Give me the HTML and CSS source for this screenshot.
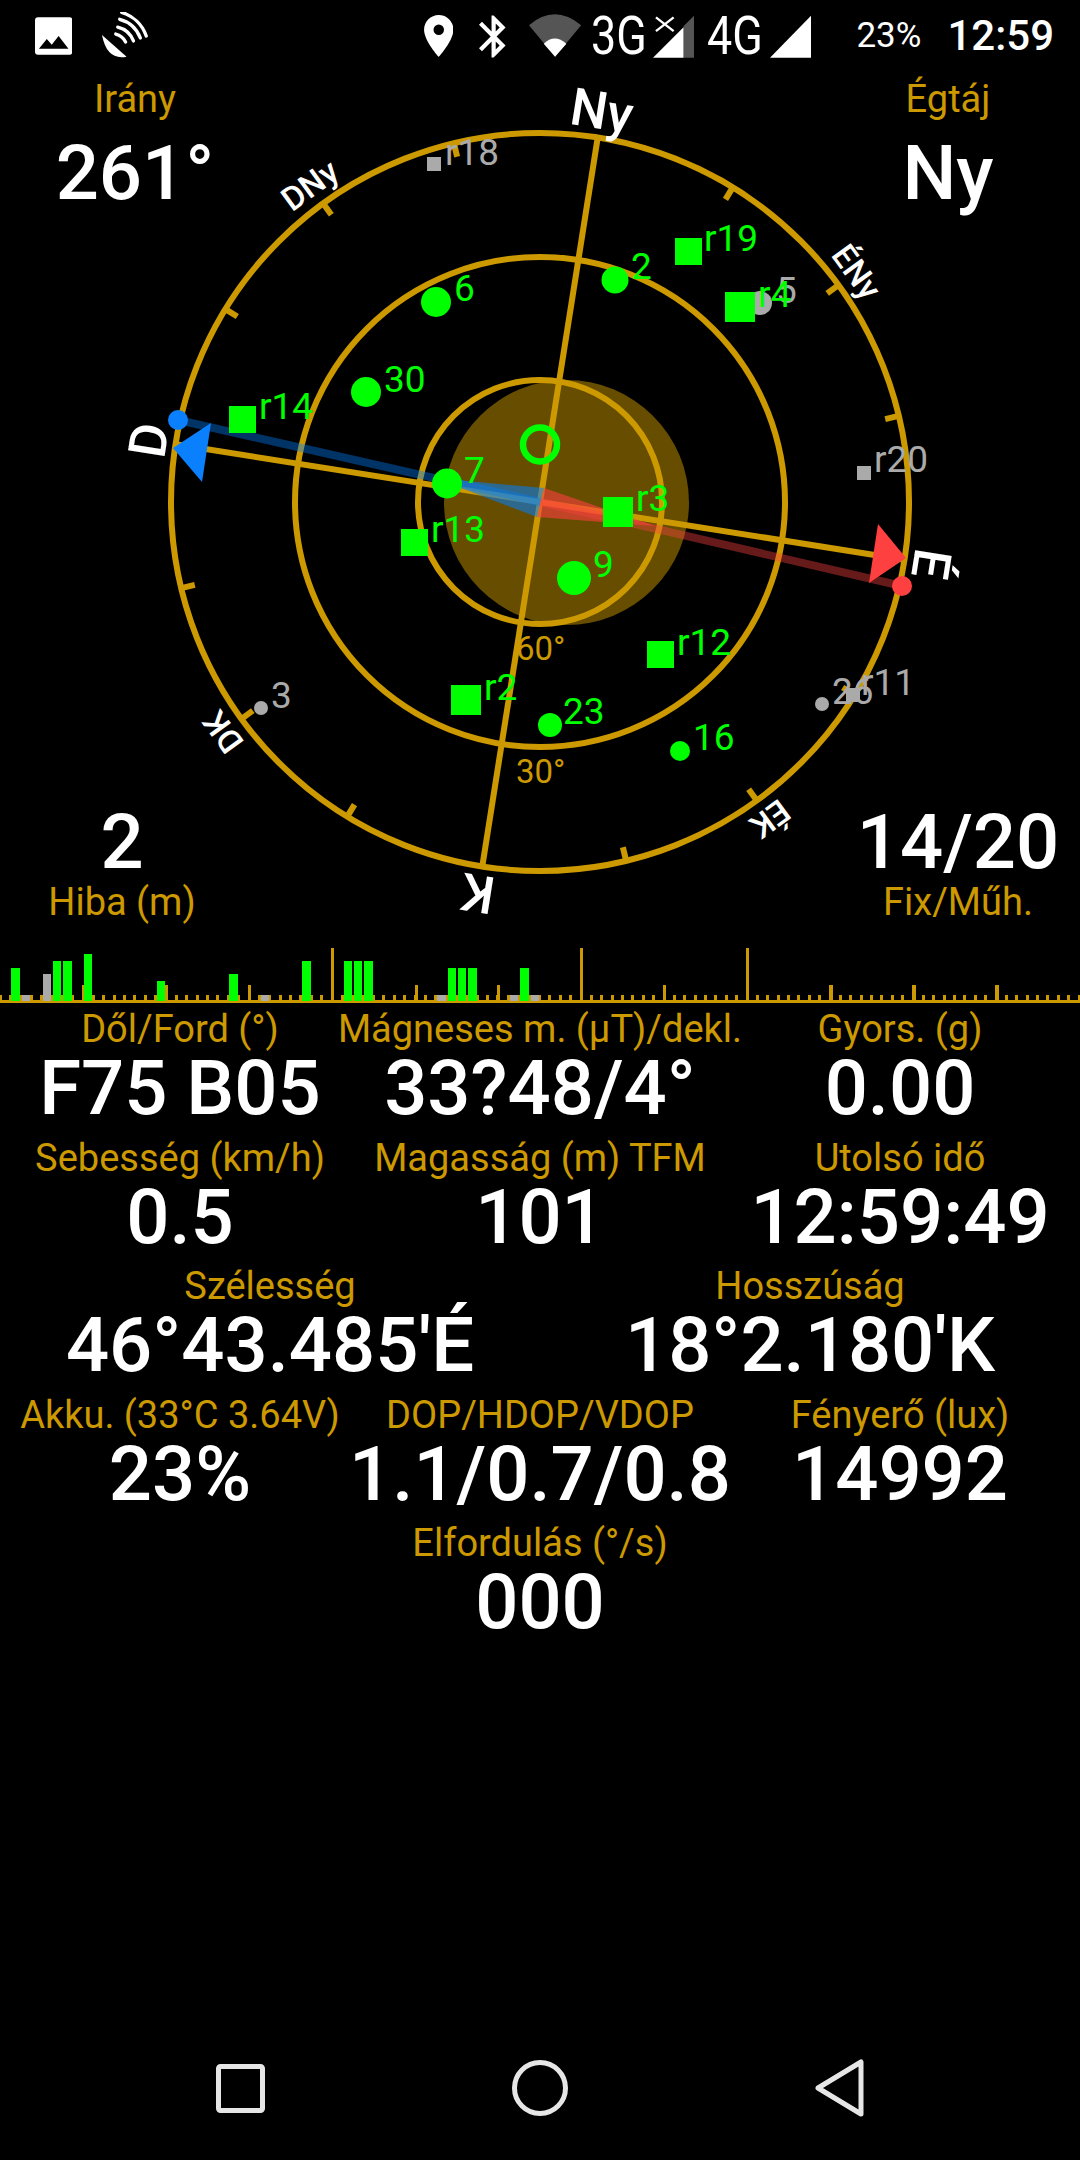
FILE: index.html
```html
<!DOCTYPE html>
<html lang="hu">
<head>
  <meta charset="UTF-8">
  <title>GPS állapot</title>
  <link rel="stylesheet" href="styles.css">
</head>
<body>
  <header class="status">
    <svg class="ic-image" width="38" height="38" viewBox="0 0 38 38">
      <rect width="38" height="38" rx="3" fill="#fff"/>
      <path d="M4 32 L12 22 L17 28 L24 19 L34 32 Z" fill="#000"/>
    </svg>
    <svg class="ic-dish" width="48" height="48" viewBox="102 13 48 48">
      <path d="M103 36 L128 58 Q108 62 103 36 Z" fill="#fff"/>
      <g fill="none" stroke="#fff" stroke-width="3.4" stroke-linecap="round">
        <path d="M117 35 A15.5 15.5 0 0 1 127 43"/>
        <path d="M119 28 A23 23 0 0 1 135 42"/>
        <path d="M121 20 A31 31 0 0 1 142 39"/>
        <path d="M123 13 A38 38 0 0 1 148 37"/>
      </g>
    </svg>
    <svg class="ic-pin" width="30" height="42" viewBox="5 2 14 20">
      <path fill="#fff" d="M12 2C8.13 2 5 5.13 5 9c0 5.25 7 13 7 13s7-7.75 7-13c0-3.87-3.13-7-7-7zm0 9.5a2.5 2.5 0 1 1 0-5 2.5 2.5 0 0 1 0 5z"/>
    </svg>
    <svg class="ic-bt" width="27" height="43" viewBox="5 2 12.71 20">
      <path fill="#fff" d="M17.71 7.71L12 2h-1v7.59L6.41 5 5 6.41 10.59 12 5 17.59 6.41 19 11 14.41V22h1l5.71-5.71-4.3-4.29 4.3-4.29zM13 5.83l1.88 1.88L13 9.59V5.83zm1.88 10.46L13 18.17v-3.76l1.88 1.88z"/>
    </svg>
    <svg class="ic-wifi" width="54" height="44" viewBox="529 14 54 44">
      <path d="M555.5 57 L529 25 Q555 3 582 25 Z" fill="#555"/>
      <path d="M555.5 57 L544 44 Q555 33 567 44 Z" fill="#fff"/>
    </svg>
    <span class="net net-3g">3G</span>
    <svg class="ic-sim1" width="42" height="43" viewBox="654 14 42 43">
      <path d="M685 25 L696 14 V57 H685 Z" fill="#555"/>
      <path d="M654 57 L685 26 V57 Z" fill="#fff"/>
      <path d="M657 16 L675 30 M675 16 L657 30" stroke="#fff" stroke-width="2.4"/>
    </svg>
    <span class="net net-4g">4G</span>
    <svg class="ic-sim2" width="42" height="43" viewBox="0 0 42 43">
      <path d="M0 43 L42 0 V43 Z" fill="#fff"/>
    </svg>
    <span class="battery">23%</span>
    <span class="clock">12:59</span>
  </header>

  <section class="sky">
    <svg class="sky-plot" width="1080" height="858" viewBox="0 72 1080 858">
      <circle cx="566.5" cy="502.5" r="122.5" fill="#664d00"/>

      <g class="grid">
        <circle cx="540" cy="502" r="369"/>
        <circle cx="540" cy="502" r="245"/>
        <circle cx="540" cy="502" r="122"/>
        <line class="axis" x1="540" y1="133" x2="540" y2="871" transform="rotate(9 540 502)"/>
        <line class="axis" x1="171" y1="502" x2="909" y2="502" transform="rotate(9 540 502)"/>
        <g class="ticks">
          <line x1="540" y1="131" x2="540" y2="147" transform="rotate(31.5 540 502)"/>
          <line x1="540" y1="131" x2="540" y2="147" transform="rotate(54 540 502)"/>
          <line x1="540" y1="131" x2="540" y2="147" transform="rotate(76.5 540 502)"/>
          <line x1="540" y1="131" x2="540" y2="147" transform="rotate(121.5 540 502)"/>
          <line x1="540" y1="131" x2="540" y2="147" transform="rotate(144 540 502)"/>
          <line x1="540" y1="131" x2="540" y2="147" transform="rotate(166.5 540 502)"/>
          <line x1="540" y1="131" x2="540" y2="147" transform="rotate(211.5 540 502)"/>
          <line x1="540" y1="131" x2="540" y2="147" transform="rotate(234 540 502)"/>
          <line x1="540" y1="131" x2="540" y2="147" transform="rotate(256.5 540 502)"/>
          <line x1="540" y1="131" x2="540" y2="147" transform="rotate(301.5 540 502)"/>
          <line x1="540" y1="131" x2="540" y2="147" transform="rotate(324 540 502)"/>
          <line x1="540" y1="131" x2="540" y2="147" transform="rotate(346.5 540 502)"/>
        </g>
      </g>

      <text class="elev" x="516" y="660">60°</text>
      <text class="elev" x="516" y="783">30°</text>

      <g class="cardinal">
        <text x="540" y="124" transform="rotate(9 540 502)">Ny</text>
        <text x="540" y="124" transform="rotate(99 540 502)">É</text>
        <text x="540" y="124" transform="rotate(189 540 502)">K</text>
        <text x="540" y="124" transform="rotate(279 540 502)">D</text>
      </g>
      <g class="intercardinal">
        <text x="540" y="122" transform="rotate(54 540 502)">ÉNy</text>
        <text x="540" y="122" transform="rotate(144 540 502)">ÉK</text>
        <text x="540" y="122" transform="rotate(234 540 502)">DK</text>
        <text x="540" y="122" transform="rotate(324 540 502)">DNy</text>
      </g>

      <line class="ray-blue" x1="178" y1="420" x2="540" y2="502"/>
      <line class="ray-red" x1="902" y1="586" x2="540" y2="502"/>
      <polygon class="wedge-blue" points="435,478 544,488 537,517"/>
      <polygon class="wedge-red" points="655,526 544,488 537,517"/>
      <polygon class="arrow-blue" points="173,448 211,423 202,482"/>
      <polygon class="arrow-red" points="906,558 878,524 869,583"/>
      <circle class="dot-blue" cx="178" cy="420" r="10"/>
      <circle class="dot-red" cx="902" cy="586" r="10"/>

      <g class="sat off">
        <rect x="427" y="157" width="14" height="14"/><text x="445" y="165">r18</text>
        <circle cx="760" cy="303" r="12"/><text x="776" y="303">5</text>
        <rect x="857" y="466" width="14" height="14"/><text x="874" y="472">r20</text>
        <circle cx="261" cy="708" r="7"/><text x="271" y="708">3</text>
        <circle cx="822" cy="704" r="7"/><text x="832" y="704">26</text>
        <rect x="846" y="688" width="14" height="14"/><text x="861" y="695">r11</text>
      </g>
      <g class="sat on">
        <circle cx="436" cy="302" r="15"/><text x="454" y="301">6</text>
        <circle cx="366" cy="392" r="15"/><text x="384" y="392">30</text>
        <rect x="229" y="406" width="27" height="27"/><text x="259" y="419">r14</text>
        <rect x="675" y="238" width="27" height="27"/><text x="704" y="251">r19</text>
        <circle cx="615" cy="280" r="13.5"/><text x="631" y="279">2</text>
        <rect x="725" y="292" width="30" height="30"/><text x="758" y="307">r4</text>
        <circle cx="447" cy="483.5" r="15"/><text x="464" y="483">7</text>
        <rect x="401" y="529" width="27" height="27"/><text x="431" y="542">r13</text>
        <rect x="603" y="497" width="30" height="30"/><text x="636" y="511">r3</text>
        <circle cx="574" cy="578" r="17"/><text x="593" y="577">9</text>
        <rect x="647" y="641" width="27" height="27"/><text x="677" y="655">r12</text>
        <circle cx="550" cy="725" r="12"/><text x="563" y="724">23</text>
        <circle cx="680" cy="751" r="10"/><text x="693" y="750">16</text>
        <rect x="451" y="685" width="30" height="30"/><text x="484" y="700">r2</text>
      </g>
      <circle class="zenith" cx="540" cy="444.5" r="17"/>
    </svg>

    <div class="corners corners-top">
      <div class="corner corner-heading">
        <div class="label">Irány</div>
        <div class="value">261°</div>
      </div>
      <div class="corner corner-dir">
        <div class="label">Égtáj</div>
        <div class="value">Ny</div>
      </div>
    </div>
    <div class="corners corners-bottom">
      <div class="corner corner-small">
        <div class="value">2</div>
        <div class="label">Hiba (m)</div>
      </div>
      <div class="corner corner-small">
        <div class="value">14/20</div>
        <div class="label">Fix/Műh.</div>
      </div>
    </div>
  </section>

  <svg class="signal" width="1080" height="73" viewBox="0 930 1080 73">
    <line class="tick-small" x1="-1.5" y1="997.5" x2="1080" y2="997.5"/>
    <g class="tick-big">
      <rect x="81.5" y="985" width="3" height="15"/>
      <rect x="164.5" y="985" width="3" height="15"/>
      <rect x="248" y="985" width="3" height="15"/>
      <rect x="331" y="948" width="3" height="52"/>
      <rect x="415" y="985" width="3" height="15"/>
      <rect x="497" y="985" width="3" height="15"/>
      <rect x="580" y="948" width="3" height="52"/>
      <rect x="663" y="985" width="3" height="15"/>
      <rect x="746" y="948" width="3" height="52"/>
      <rect x="829" y="985" width="4" height="15"/>
      <rect x="912" y="985" width="4" height="15"/>
      <rect x="995" y="985" width="4" height="15"/>
    </g>
    <rect class="baseline" x="0" y="1000" width="1080" height="3"/>
    <g class="bar-off">
      <rect x="22" y="995" width="8" height="6"/>
      <rect x="43" y="974" width="8" height="27"/>
      <rect x="261" y="995" width="8" height="6"/>
      <rect x="437" y="995" width="9" height="6"/>
      <rect x="510" y="995" width="8" height="6"/>
      <rect x="531" y="995" width="8" height="6"/>
    </g>
    <g class="bar-on">
      <rect x="11" y="968" width="9" height="33"/>
      <rect x="53" y="961" width="8" height="40"/>
      <rect x="63" y="961" width="9" height="40"/>
      <rect x="84" y="954" width="8" height="47"/>
      <rect x="157" y="981" width="8" height="20"/>
      <rect x="229" y="974" width="9" height="27"/>
      <rect x="302" y="961" width="9" height="40"/>
      <rect x="344" y="961" width="8" height="40"/>
      <rect x="354" y="961" width="8" height="40"/>
      <rect x="364" y="961" width="9" height="40"/>
      <rect x="448" y="968" width="8" height="33"/>
      <rect x="458" y="968" width="8" height="33"/>
      <rect x="468" y="968" width="9" height="33"/>
      <rect x="520" y="968" width="9" height="33"/>
    </g>
  </svg>

  <main class="readings">
    <div class="row row-3">
      <div class="cell"><div class="label">Dől/Ford (°)</div><div class="value">F75 B05</div></div>
      <div class="cell"><div class="label">Mágneses m. (µT)/dekl.</div><div class="value">33?48/4°</div></div>
      <div class="cell"><div class="label">Gyors. (g)</div><div class="value">0.00</div></div>
    </div>
    <div class="row row-3">
      <div class="cell"><div class="label">Sebesség (km/h)</div><div class="value">0.5</div></div>
      <div class="cell"><div class="label">Magasság (m) TFM</div><div class="value">101</div></div>
      <div class="cell"><div class="label">Utolsó idő</div><div class="value">12:59:49</div></div>
    </div>
    <div class="row row-2">
      <div class="cell"><div class="label">Szélesség</div><div class="value">46°43.485'É</div></div>
      <div class="cell"><div class="label">Hosszúság</div><div class="value">18°2.180'K</div></div>
    </div>
    <div class="row row-3">
      <div class="cell"><div class="label">Akku. (33°C 3.64V)</div><div class="value">23%</div></div>
      <div class="cell"><div class="label">DOP/HDOP/VDOP</div><div class="value">1.1/0.7/0.8</div></div>
      <div class="cell"><div class="label">Fényerő (lux)</div><div class="value">14992</div></div>
    </div>
    <div class="row row-1">
      <div class="cell"><div class="label">Elfordulás (°/s)</div><div class="value">000</div></div>
    </div>
  </main>

  <nav class="navbar">
    <svg width="49" height="49" viewBox="0 0 49 49">
      <rect class="nav-icon" x="2.5" y="2.5" width="44" height="44" rx="2"/>
    </svg>
    <svg width="56" height="56" viewBox="0 0 56 56">
      <circle class="nav-icon" cx="28" cy="28" r="25.5"/>
    </svg>
    <svg width="50" height="58" viewBox="0 0 50 58">
      <path class="nav-icon" d="M46 3 V55 L3 29 Z"/>
    </svg>
  </nav>
</body>
</html>
```

FILE: styles.css
```css
html, body {
  margin: 0;
  padding: 0;
}

body {
  width: 1080px;
  height: 2160px;
  background: #000;
  color: #fff;
  font-family: Roboto, sans-serif;
  display: flex;
  flex-direction: column;
  overflow: hidden;
}

svg {
  display: block;
}

/* status bar */
.status {
  height: 72px;
  padding: 0 26px 0 35px;
  display: flex;
  align-items: center;
  flex: none;
}

.ic-dish { margin-left: 29px; }
.ic-pin { margin-left: 275px; }
.ic-bt { margin-left: 26px; }
.ic-wifi { margin-left: 23px; }
.ic-sim1 { margin-left: 7px; }
.ic-sim2 { margin-left: 8px; }

.net {
  width: 55px;
  font-size: 54px;
  font-weight: 400;
  line-height: 54px;
  white-space: nowrap;
  transform: scaleX(0.83);
  transform-origin: left center;
}

.net-3g { margin-left: 9px; }
.net-4g { margin-left: 13px; }

.battery {
  margin-left: 45px;
  width: 64px;
  font-size: 35px;
  line-height: 40px;
  white-space: nowrap;
}

.clock {
  margin-left: 27px;
  font-size: 42px;
  font-weight: 500;
  line-height: 44px;
}

/* sky plot */
.sky {
  position: relative;
  height: 858px;
  flex: none;
  display: flex;
  flex-direction: column;
  justify-content: space-between;
}

.sky-plot {
  position: absolute;
  top: 0;
  left: 0;
  overflow: visible;
}

.grid circle,
.ticks line {
  fill: none;
  stroke: #cc9900;
  stroke-width: 6;
}

.axis {
  stroke: #cc9900;
  stroke-width: 6;
}

.elev {
  fill: #cc9900;
  font-size: 33px;
}

.cardinal text {
  fill: #fff;
  font-size: 52px;
  font-weight: 500;
  text-anchor: middle;
}

.intercardinal text {
  fill: #fff;
  font-size: 33px;
  font-weight: 500;
  text-anchor: middle;
}

.ray-blue {
  stroke: rgba(0, 128, 255, 0.4);
  stroke-width: 8;
}

.ray-red {
  stroke: rgba(255, 64, 64, 0.4);
  stroke-width: 8;
}

.wedge-blue { fill: rgba(0, 128, 255, 0.55); }
.wedge-red { fill: rgba(255, 64, 64, 0.6); }
.arrow-blue, .dot-blue { fill: #0a80ff; }
.arrow-red, .dot-red { fill: #ff4040; }

.sat text { font-size: 37px; }
.sat.on { fill: #00ff00; }
.sat.off { fill: #aaaaaa; }

.zenith {
  fill: none;
  stroke: #00ff00;
  stroke-width: 6.5;
}

.corners {
  position: relative;
  display: flex;
  justify-content: space-between;
}

.corners-top {
  padding-top: 4px;
}

.corners-bottom {
  padding-bottom: 5px;
}

.corner {
  text-align: center;
}

.corner-heading { width: 270px; }
.corner-dir { width: 264px; }
.corner-small { width: 244px; }

.corners-top .value {
  margin-top: 9px;
}

.corners-bottom .value {
  margin-bottom: -5px;
}

.label {
  color: #cc9900;
  font-size: 38px;
  line-height: 46px;
  white-space: nowrap;
}

.value {
  font-size: 76px;
  font-weight: 500;
  line-height: 76px;
  white-space: nowrap;
}

.corner .value {
  line-height: 84px;
}

/* signal bars */
.signal {
  flex: none;
  shape-rendering: crispEdges;
}

.tick-small {
  stroke: #cc9900;
  stroke-width: 5;
  stroke-dasharray: 3 7.375;
}

.tick-big, .baseline { fill: #cc9900; }
.bar-on { fill: #00ff00; }
.bar-off { fill: #aaaaaa; }

/* readings */
.row {
  height: 128.6px;
  padding-top: 3px;
  box-sizing: border-box;
  display: grid;
}

.row-3 { grid-template-columns: repeat(3, 360px); }
.row-2 { grid-template-columns: repeat(2, 540px); }
.row-1 { grid-template-columns: 1080px; }

.cell {
  display: flex;
  flex-direction: column;
  align-items: center;
}

.cell .value {
  margin-top: -2px;
}

/* nav bar */
.navbar {
  margin-top: auto;
  height: 144px;
  padding: 0 90px;
  display: grid;
  grid-template-columns: repeat(3, 300px);
  justify-items: center;
  align-items: center;
}

.nav-icon {
  fill: none;
  stroke: #e6e6e6;
  stroke-width: 5;
  stroke-linejoin: round;
}
```
